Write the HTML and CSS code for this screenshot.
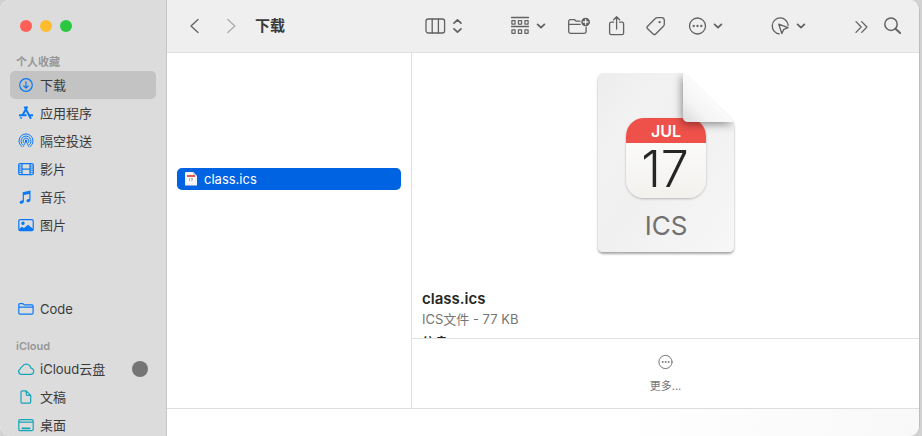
FILE: index.html
```html
<!DOCTYPE html>
<html lang="zh-CN">
<head>
<meta charset="utf-8">
<meta name="viewport" content="width=device-width, initial-scale=1">
<title>下载</title>
<link rel="stylesheet" href="styles.css">
</head>
<body>
<div class="window">
  <aside class="sidebar">
    <div class="lights">
      <button class="light light-close" aria-label="关闭"></button>
      <button class="light light-min" aria-label="最小化"></button>
      <button class="light light-zoom" aria-label="缩放"></button>
    </div>
    <nav>
      <h2 class="section-title">个人收藏</h2>
      <a class="place selected" href="#"><svg class="icon" viewBox="0 0 16 16"><circle cx="8" cy="8" r="6.3"/><path d="M8 4.6v6.4M5.4 8.6 8 11.2l2.6-2.6"/></svg>下载</a>
      <a class="place" href="#"><svg class="icon app" viewBox="0 0 16 16"><path d="M6.500 1.600 12.900 13.700M9.300 1.600 4.700 9.900M3.400 12.200l-.8 1.400M1 10.200h7.600M11.800 10.200H15"/></svg>应用程序</a>
      <a class="place" href="#"><svg class="icon" viewBox="0 0 16 16"><path d="M4.200 13.800a7 7 0 1 1 7.600 0M5.200 12a4.900 4.900 0 1 1 5.600 0M6.300 10.200a2.800 2.800 0 1 1 3.400 0" stroke-width="1"/><path d="m8 8.200-3 5.800M8 8.200l3 5.800" stroke-width=".8"/><circle cx="8" cy="8" r=".6" class="solid"/></svg>隔空投送</a>
      <a class="place" href="#"><svg class="icon" viewBox="0 0 16 16"><rect x=".7" y="2.600" width="14.600" height="11" rx="1.300"/><path d="M4 2.600v11M12 2.600v11M4 8.100h8"/><path d="M.8 5h3M.8 7.100h3M.8 9.200h3M.8 11.300h3M12 5h3M12 7.100h3M12 9.200h3M12 11.300h3" stroke-width=".9"/></svg>影片</a>
      <a class="place" href="#"><svg class="icon" viewBox="0 0 16 16"><path class="solid" d="M4.700 3.300 12.500 1.500v9.300c0 1.400-1 2.400-2.300 2.400-2.200 0-2.400-2.400-.3-3l1.400-.5V4.900L5.900 6.100v6.200c0 1.400-1 2.500-2.500 2.500-2.200 0-2.400-2.400-.3-3l1.600-.5z" stroke="none"/></svg>音乐</a>
      <a class="place" href="#"><svg class="icon" viewBox="0 0 16 16"><rect x=".8" y="2.600" width="14.400" height="11" rx="1.400"/><circle class="solid" cx="5" cy="6.200" r="1.100"/><path class="solid" d="m1 12 3-2.200 2 1.200 4-3.200 5 3.900V13H1z" stroke="none"/></svg>图片</a>
      <a class="place spaced" href="#"><svg class="icon" viewBox="0 0 16 16"><path d="M.8 12V3.700c0-.7.4-1.100 1.100-1.100h3l1.300 1.300h7.700c.8 0 1.200.4 1.200 1.100V12c0 .8-.4 1.200-1.200 1.200H2c-.8 0-1.200-.4-1.200-1.200zM.8 6.200h14.300"/></svg>Code</a>
      <h2 class="section-title cloud-title">iCloud</h2>
      <a class="place teal" href="#"><svg class="icon" viewBox="0 0 16 16"><path d="M3.500 13.400h8.900a3.100 3.100 0 0 0 .5-6.200A4.700 4.700 0 0 0 4.100 5.700 2.500 2.500 0 0 0 2.400 8a2.800 2.800 0 0 0 1.100 5.400z"/></svg>iCloud云盘<span class="status"></span></a>
      <a class="place teal" href="#"><svg class="icon" viewBox="0 0 16 16"><path d="M8.200 1.800H4.300c-.9 0-1.300.4-1.300 1.300v9.800c0 .9.400 1.300 1.300 1.300h7.100c.9 0 1.300-.4 1.300-1.300V6.400zM8.200 2v3.300c0 .8.300 1.100 1.100 1.100h3.300"/></svg>文稿</a>
      <a class="place teal" href="#"><svg class="icon" viewBox="0 0 16 16"><rect x=".8" y="2.600" width="14.400" height="11" rx="1.300"/><path d="M.8 5.200h14.400"/><path d="M3.600 11.400h8.800" stroke-width="1.800"/></svg>桌面</a>
    </nav>
  </aside>

  <main class="main">
    <header class="toolbar">
      <div class="nav-buttons">
        <button aria-label="后退"><svg width="10" height="16" viewBox="0 0 10 16"><path d="M9 1.500 2 8l7 6.500"/></svg></button>
        <button aria-label="前进" disabled><svg width="10" height="16" viewBox="0 0 10 16"><path d="M1.800 1.500 8.800 8l-7 6.500"/></svg></button>
      </div>
      <h1 class="title">下载</h1>
      <div class="tools">
        <button class="pair" aria-label="显示方式"><svg width="22" height="20" viewBox="0 0 22 20"><rect x="1" y="3" width="18.600" height="14" rx="2.200"/><path d="M7.200 3v14M13.400 3v14"/></svg><svg width="8" height="16" viewBox="0 0 8 16"><path d="M0 5.200 3.500 1.900 7 5.200M0 10.800l3.500 3.300L7 10.800" stroke-width="1.700"/></svg></button>
        <button class="pair" aria-label="分组"><svg width="20" height="20" viewBox="0 0 20 20"><path d="M1.500 1.500h17M1.500 10.500h17"/><path d="M1.900 4.700h3.200v3.400H1.900zM8.400 4.700h3.200v3.400H8.400zM14.900 4.700h3.200v3.400h-3.200zM1.900 13.900h3.200v3.400H1.900zM8.400 13.900h3.200v3.400H8.400zM14.900 13.900h3.200v3.400h-3.200z" stroke-width="1.200"/></svg><svg width="8" height="8" viewBox="0 0 8 8"><path d="M.6 2.400 4 5.600l3.400-3.200" stroke-width="1.800"/></svg></button>
        <div class="actions">
          <button aria-label="新建文件夹"><svg width="22" height="20" viewBox="0 0 22 20"><path d="M13 5.200H9.200L7.600 3.700H3.400c-1.100 0-1.700.6-1.700 1.700v10.200c0 1.100.6 1.700 1.700 1.700h14c1.100 0 1.700-.6 1.700-1.700v-4.400M1.700 8.300h11.500"/><circle cx="18.600" cy="6" r="3.700" class="grey"/><path d="M18.600 3.700v4.600M16.300 6h4.600" class="light-line"/></svg></button>
          <button aria-label="共享"><svg width="16" height="22" viewBox="0 0 16 22"><path d="M4.600 7.200H2.300C1.200 7.200.6 7.800.6 8.900v9c0 1.100.6 1.700 1.700 1.700h10.600c1.100 0 1.700-.6 1.700-1.700v-9c0-1.100-.6-1.700-1.700-1.700h-2.300M7.600 14V2M4.600 4.800l3-3 3 3"/></svg></button>
          <button aria-label="标签"><svg width="22" height="20" viewBox="0 0 22 20"><path d="m2.600 10.200 7.700-7.700c.7-.7 1.200-.9 2.100-.9h4.200c1.900 0 2.700.8 2.700 2.700v3.900c0 .9-.2 1.400-.9 2.100l-7.700 7.700c-.9.900-1.700.9-2.600 0l-5.500-5.300c-.9-.9-.9-1.600 0-2.500z"/><circle cx="14.600" cy="6.200" r=".5" class="grey"/></svg></button>
          <button class="pair" aria-label="更多操作"><svg width="20" height="20" viewBox="0 0 20 20"><circle cx="10.500" cy="10" r="8"/><circle cx="6.700" cy="10" r=".5" class="grey"/><circle cx="10.500" cy="10" r=".5" class="grey"/><circle cx="14.300" cy="10" r=".5" class="grey"/></svg><svg width="8" height="8" viewBox="0 0 8 8"><path d="M.6 2.400 4 5.600l3.400-3.200" stroke-width="1.800"/></svg></button>
        </div>
        <button class="pair" aria-label="快速操作"><svg width="20" height="20" viewBox="0 0 20 20"><path d="M9.200 17.900a8 8 0 1 1 9-8.400"/><path d="m8.800 8.200 9.200 3.500-4.200 1.700-2 4.100z"/></svg><svg width="8" height="8" viewBox="0 0 8 8"><path d="M.6 2.400 4 5.600l3.400-3.200" stroke-width="1.800"/></svg></button>
        <div class="tail">
          <button aria-label="更多工具"><svg width="16" height="16" viewBox="0 0 16 16"><path d="M3 3.600 8.200 9 3 14.400M8.700 3.600 13.900 9l-5.200 5.400"/></svg></button>
          <button aria-label="搜索"><svg width="20" height="20" viewBox="0 0 20 20"><circle cx="9" cy="8.200" r="6.200" stroke-width="1.500"/><path d="m13.500 12.700 4.600 4.300" stroke-width="1.900"/></svg></button>
        </div>
      </div>
    </header>

    <div class="columns">
      <section class="files">
        <a class="file" href="#"><svg width="14" height="16" viewBox="0 0 14 16"><path fill="#f3f3f3" d="M1 2q0-1 1-1h7l4 4v9.500H1z"/><path fill="#cfd6e0" d="M9 1v4h4z"/><path fill="#fff" d="M3 5h8v7H3z"/><path fill="#e8564f" d="M3 4h8v2H3z"/><path stroke="#888" stroke-width=".8" d="M5.700 7.200v3M7 7.600h1.600l-1 2.600" fill="none"/></svg>class.ics</a>
      </section>
      <section class="preview">
        <div class="info">
          <svg class="document" width="160" height="192" viewBox="0 0 160 192" role="img" aria-label="ICS">
            <defs>
              <linearGradient id="paper" x1="0" y1="0" x2="1" y2="1"><stop offset="0" stop-color="#ededed"/><stop offset=".25" stop-color="#f2f2f2"/><stop offset=".5" stop-color="#f0f0f0"/><stop offset="1" stop-color="#f7f7f7"/></linearGradient>
              <linearGradient id="fold" x1="0" y1="1" x2=".6" y2=".4"><stop offset="0" stop-color="#dadada"/><stop offset=".45" stop-color="#f4f4f4"/><stop offset="1" stop-color="#fdfdfd"/></linearGradient>
              <linearGradient id="card" x1="0" y1="0" x2="0" y2="1"><stop offset="0" stop-color="#fff"/><stop offset="1" stop-color="#f2f1ee"/></linearGradient>
              <filter id="drop" x="-10%" y="-10%" width="120%" height="125%"><feDropShadow dx="0" dy="2" stdDeviation="1.200" flood-opacity=".35"/></filter>
              <filter id="lift" x="-10%" y="-10%" width="120%" height="125%"><feDropShadow dx="0" dy="1" stdDeviation="1" flood-opacity=".25"/></filter>
              <filter id="soft" x="-30%" y="-30%" width="160%" height="160%"><feDropShadow dx="-1" dy="2" stdDeviation="4" flood-opacity=".45"/></filter>
              <clipPath id="sheet"><path d="M17 5h80l51 49v125a5 5 0 0 1-5 5H17a5 5 0 0 1-5-5V10a5 5 0 0 1 5-5z"/></clipPath>
              <clipPath id="calendar"><rect x="40" y="50" width="80" height="80" rx="18"/></clipPath>
            </defs>
            <path filter="url(#drop)" fill="url(#paper)" d="M17 5h77c4 0 6 1 9 4l41 40c3 3 4 5 4 9v121a5 5 0 0 1-5 5H17a5 5 0 0 1-5-5V10a5 5 0 0 1 5-5z"/>
            <rect x="40" y="50" width="80" height="80" rx="18" fill="url(#card)" filter="url(#lift)"/>
            <path d="M39 50h82v25H39z" fill="#ee514a" clip-path="url(#calendar)"/>
            <text x="80" y="69" class="month">JUL</text>
            <text x="79" y="119" class="day">17</text>
            <text x="80" y="167" class="kind">ICS</text>
            <g clip-path="url(#sheet)"><path d="M97 5v44a5 5 0 0 0 5 5h47L99 6z" fill="#eee" filter="url(#soft)"/></g>
            <path d="M97 5v44a5 5 0 0 0 5 5h45c-1-2-2-3-4-5L103 9c-2-2-4-3-6-4z" fill="url(#fold)"/>
          </svg>
          <h2 class="name">class.ics</h2>
          <p class="meta">ICS文件 - 77 KB</p>
          <h3 class="details">信息</h3>
        </div>
        <div class="quick">
          <button class="more"><svg width="16" height="16" viewBox="0 0 16 16"><circle cx="8.500" cy="8" r="6.600"/><circle cx="5.500" cy="8" r=".5" class="grey"/><circle cx="8.500" cy="8" r=".5" class="grey"/><circle cx="11.500" cy="8" r=".5" class="grey"/></svg>更多...</button>
        </div>
      </section>
    </div>
    <footer class="pathbar"></footer>
  </main>
</div>
</body>
</html>
```
FILE: styles.css
```css
* { box-sizing: border-box; }

body {
  margin: 0;
  background: #d2d2d2;
  color: #262626;
  font: 13px/20px Inter, "Noto Sans CJK SC", sans-serif;
}

h1, h2, h3, p { margin: 0; }
a { color: inherit; text-decoration: none; }
svg { display: block; flex: none; overflow: visible; }

button {
  display: block;
  padding: 0;
  border: 0;
  background: none;
  color: inherit;
  font: inherit;
}

.window {
  display: flex;
  height: 100vh;
  margin-right: 2px;
  border-right: 1px solid #bdbdbd;
  border-radius: 10px;
  overflow: hidden;
  background: #fff;
}

.sidebar {
  flex: none;
  width: 167px;
  padding: 20px 10px 0;
  border-right: 1px solid #c6c6c6;
  background: #dcdcdc;
  color: #3a3a3a;
  overflow: hidden;
}

.lights { display: flex; gap: 8px; padding: 0 10px; }
.light { width: 12px; height: 12px; border-radius: 50%; }
.light-close { background: #ff5f57; }
.light-min { background: #febc2e; }
.light-zoom { background: #28c840; }

.section-title {
  margin-top: 21px;
  padding: 0 6px;
  color: #979797;
  font-size: 11px;
  font-weight: 600;
  line-height: 18px;
}
.cloud-title { margin-top: 14px; }

.place {
  display: flex;
  align-items: center;
  gap: 6px;
  height: 28px;
  padding: 0 8px;
  border-radius: 5px;
}
.place.selected { background: #c3c3c3; }
.place.spaced { margin-top: 56px; }

.icon {
  width: 16px;
  height: 16px;
  fill: none;
  stroke: #0a78f5;
  stroke-width: 1.2;
  stroke-linecap: butt;
  stroke-linejoin: round;
}
.icon .solid { fill: #0a78f5; }
.icon.app { stroke-width: 2; }
.teal .icon { stroke: #14a5b8; }

.status {
  width: 16px;
  height: 16px;
  margin-left: auto;
  border-radius: 50%;
  background: #757575;
}

.main {
  display: flex;
  flex: 1;
  flex-direction: column;
  min-width: 0;
}

.toolbar {
  display: flex;
  flex: none;
  align-items: center;
  height: 53px;
  padding: 0 17px 0 22px;
  border-bottom: 1px solid #e0e0e0;
  background: #efefef;
}
.toolbar svg, .more svg {
  fill: none;
  stroke: #626262;
  stroke-width: 1.3;
  stroke-linecap: round;
  stroke-linejoin: round;
}
.toolbar .grey { fill: #626262; }
.toolbar .light-line { stroke: #efefef; }
.toolbar button:disabled svg { stroke: #ababab; }

.nav-buttons { display: flex; gap: 27px; }
.title { margin-left: 19px; color: #3a3a3a; font-size: 15px; font-weight: 700; }
.tools { display: flex; align-items: center; gap: 48px; margin-left: auto; }
.pair { display: flex; align-items: center; gap: 7px; }
.actions { display: flex; align-items: center; gap: 20px; margin-left: -26px; }
.tail { display: flex; align-items: center; gap: 13px; }

.columns { display: flex; flex: 1; min-height: 0; }

.files {
  flex: none;
  width: 245px;
  padding: 115px 10px 0;
  border-right: 1px solid #e2e2e2;
}
.file {
  display: flex;
  align-items: center;
  gap: 6px;
  height: 22px;
  padding: 0 7px;
  border-radius: 5px;
  background: #0063e1;
  color: #fff;
}

.preview {
  display: flex;
  flex: 1;
  flex-direction: column;
  min-width: 0;
}
.info { flex: 1; min-height: 0; padding: 15px 10px 0; overflow: hidden; }
.document { margin: 0 auto; }
.document text { text-anchor: middle; font-family: Inter, sans-serif; }
.document .month { fill: #fff; font-size: 16px; font-weight: 600; }
.document .day { fill: #262626; font-size: 50px; font-weight: 300; }
.document .kind { fill: #707070; font-size: 26px; }

.name { margin-top: 28px; font-size: 15px; font-weight: 600; line-height: 21px; }
.meta { color: #757575; }
.details { font-size: 13px; font-weight: 700; line-height: 26px; }

.quick {
  display: flex;
  flex: none;
  justify-content: center;
  height: 70px;
  padding-top: 15px;
  border-top: 1px solid #e0e0e0;
}
.more {
  display: flex;
  flex-direction: column;
  align-items: center;
  gap: 6px;
  height: 42px;
  color: #757575;
  font-size: 11px;
}
.more svg { stroke: #757575; stroke-width: 1; }

.pathbar {
  flex: none;
  height: 28px;
  border-top: 1px solid #dedede;
  background: linear-gradient(100deg, #fff 60%, #f8f8f8);
}
```
